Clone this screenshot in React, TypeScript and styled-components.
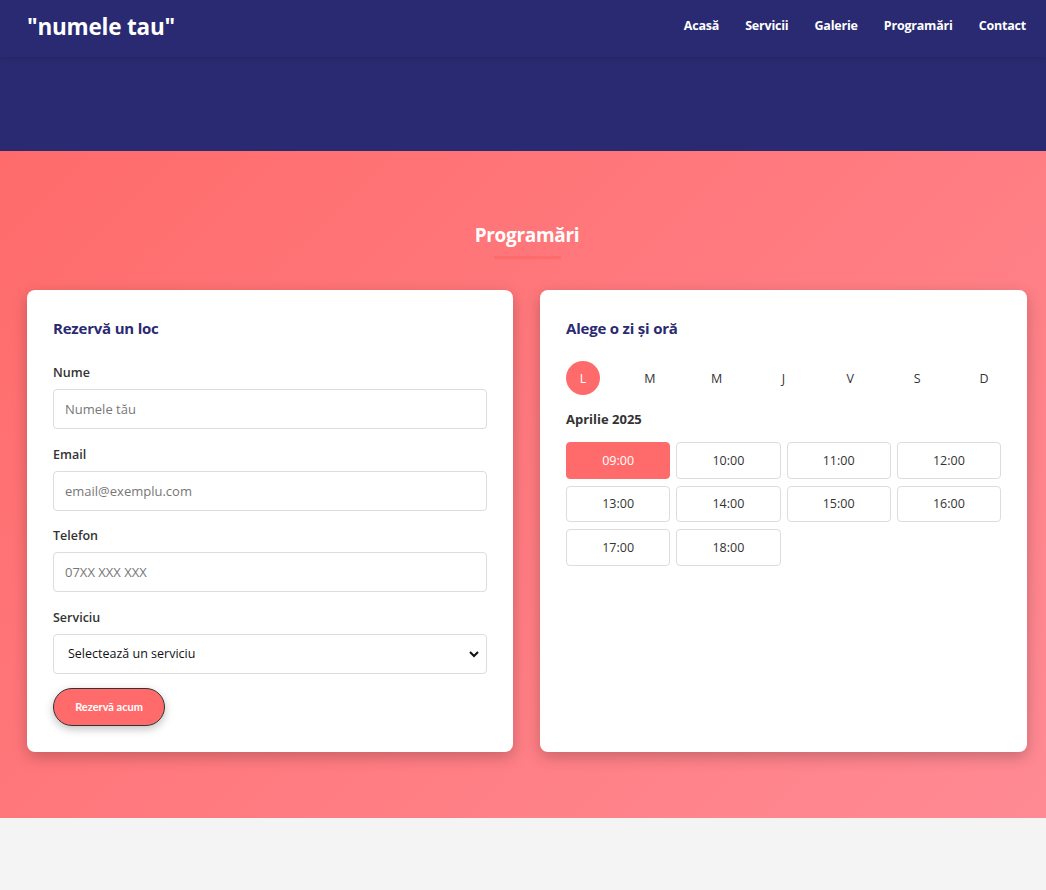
import React, { useState } from "react";
import styled, { createGlobalStyle } from "styled-components";

const Global = createGlobalStyle`
  html, body { margin: 0; padding: 0; }
  body {
    background: #f4f4f4;
    font-family: "Open Sans", "Noto Sans", sans-serif;
    color: #333;
  }
  * { box-sizing: border-box; }
`;

const Page = styled.div`
  min-height: 890px;
  background: #f4f4f4;
`;

const Header = styled.header`
  height: 57px;
  background: #2a2a72;
  display: flex;
  align-items: center;
  justify-content: space-between;
  padding: 0 20px 0 27px;
  box-shadow: 0 2px 4px rgba(0, 0, 0, 0.12);
  position: relative;
  z-index: 1;
`;

const Logo = styled.div`
  color: #fff;
  font-size: 22.5px;
  font-weight: 700;
  letter-spacing: -0.2px;
  margin-top: -5px;
`;

const Nav = styled.nav`
  display: flex;
  gap: 26px;
  margin-top: -6px;
`;

const NavLink = styled.a`
  color: #fff;
  font-size: 12.5px;
  font-weight: 700;
  text-decoration: none;
  letter-spacing: -0.2px;
`;

const Hero = styled.div`
  height: 94px;
  background: #2a2a72;
`;

const Section = styled.section`
  background: linear-gradient(135deg, #ff6b6b 0%, #ff8a94 100%);
  padding: 70px 19px 66px 27px;
  display: flex;
  flex-direction: column;
  align-items: center;
`;

const Title = styled.h2`
  margin: 0;
  color: #fff;
  font-size: 19px;
  font-weight: 700;
  line-height: 28px;
  letter-spacing: -0.3px;
`;

const Underline = styled.div`
  width: 67px;
  height: 3px;
  background: #ff6b6b;
  margin: 7px 0 31px;
`;

const Grid = styled.div`
  width: 100%;
  display: grid;
  grid-template-columns: 486px 487px;
  gap: 27px;
`;

const Card = styled.div`
  background: #fff;
  border-radius: 8px;
  box-shadow: 0 5px 15px rgba(0, 0, 0, 0.22);
  padding: 26px;
  height: 462px;
`;

const CardTitle = styled.h3`
  margin: 0 0 24px;
  color: #2a2a72;
  font-size: 15px;
  font-weight: 700;
  line-height: 24px;
  letter-spacing: -0.2px;
`;

const Field = styled.div`
  display: flex;
  flex-direction: column;
  margin-bottom: 16.5px;
`;

const Label = styled.label`
  font-size: 12.5px;
  font-weight: 600;
  color: #333;
  line-height: 18px;
  margin-bottom: 7px;
`;

const Input = styled.input`
  height: 40px;
  border: 1px solid #ddd;
  border-radius: 4px;
  padding: 0 11px;
  font-family: inherit;
  font-size: 13px;
  color: #333;
  &::placeholder { color: #777; }
`;

const SelectBox = styled.div`
  height: 40px;
  border: 1px solid #ddd;
  border-radius: 4px;
  padding: 0 6px 0 14px;
  display: flex;
  align-items: center;
  justify-content: space-between;
  font-size: 12.5px;
  color: #111;
`;

const Button = styled.button`
  margin-top: -2.5px;
  width: 112px;
  height: 38px;
  border-radius: 20px;
  background: #ff6b6b;
  border: 1px solid #333;
  color: #fff;
  font-family: "Lato", sans-serif;
  font-weight: 700;
  font-size: 11px;
  box-shadow: 0 3px 8px rgba(0, 0, 0, 0.25);
  cursor: pointer;
`;

const Days = styled.div`
  display: flex;
  justify-content: space-between;
  margin-bottom: 14px;
  margin-top: -3px;
`;

const Day = styled.div<{ $active?: boolean }>`
  width: 34px;
  height: 34px;
  border-radius: 50%;
  display: flex;
  align-items: center;
  justify-content: center;
  font-size: 12.5px;
  background: ${(p) => (p.$active ? "#ff6b6b" : "transparent")};
  color: ${(p) => (p.$active ? "#fff" : "#333")};
`;

const Month = styled.div`
  font-size: 13px;
  font-weight: 700;
  color: #333;
  line-height: 20px;
  margin-bottom: 13px;
`;

const Slots = styled.div`
  display: grid;
  grid-template-columns: repeat(4, 1fr);
  column-gap: 6px;
  row-gap: 7px;
`;

const Slot = styled.div<{ $active?: boolean }>`
  height: 36.5px;
  border-radius: 4px;
  border: 1px solid ${(p) => (p.$active ? "#ff6b6b" : "#ddd")};
  background: ${(p) => (p.$active ? "#ff6b6b" : "#fff")};
  color: ${(p) => (p.$active ? "#fff" : "#333")};
  display: flex;
  align-items: center;
  justify-content: center;
  font-size: 12.5px;
`;

const Bottom = styled.div`
  height: 72px;
  background: #f4f4f4;
`;

const days = ["L", "M", "M", "J", "V", "S", "D"];
const times = ["09:00", "10:00", "11:00", "12:00", "13:00", "14:00", "15:00", "16:00", "17:00", "18:00"];

export default function App() {
  const [day, setDay] = useState(0);
  const [time, setTime] = useState("09:00");
  return (
    <Page>
      <Global />
      <Header>
        <Logo>"numele tau"</Logo>
        <Nav>
          <NavLink href="#">Acasă</NavLink>
          <NavLink href="#">Servicii</NavLink>
          <NavLink href="#">Galerie</NavLink>
          <NavLink href="#">Programări</NavLink>
          <NavLink href="#">Contact</NavLink>
        </Nav>
      </Header>
      <Hero />
      <Section>
        <Title>Programări</Title>
        <Underline />
        <Grid>
          <Card>
            <CardTitle>Rezervă un loc</CardTitle>
            <Field>
              <Label>Nume</Label>
              <Input placeholder="Numele tău" />
            </Field>
            <Field>
              <Label>Email</Label>
              <Input placeholder="email@exemplu.com" />
            </Field>
            <Field>
              <Label>Telefon</Label>
              <Input placeholder="07XX XXX XXX" />
            </Field>
            <Field>
              <Label>Serviciu</Label>
              <SelectBox>
                <span>Selectează un serviciu</span>
                <svg width="12" height="12" viewBox="0 0 12 12">
                  <path d="M2 4 L6 8 L10 4" fill="none" stroke="#111" strokeWidth="2" />
                </svg>
              </SelectBox>
            </Field>
            <Button>Rezervă acum</Button>
          </Card>
          <Card>
            <CardTitle>Alege o zi și oră</CardTitle>
            <Days>
              {days.map((d, i) => (
                <Day key={i} $active={i === day} onClick={() => setDay(i)}>
                  {d}
                </Day>
              ))}
            </Days>
            <Month>Aprilie 2025</Month>
            <Slots>
              {times.map((t) => (
                <Slot key={t} $active={t === time} onClick={() => setTime(t)}>
                  {t}
                </Slot>
              ))}
            </Slots>
          </Card>
        </Grid>
      </Section>
      <Bottom />
    </Page>
  );
}
